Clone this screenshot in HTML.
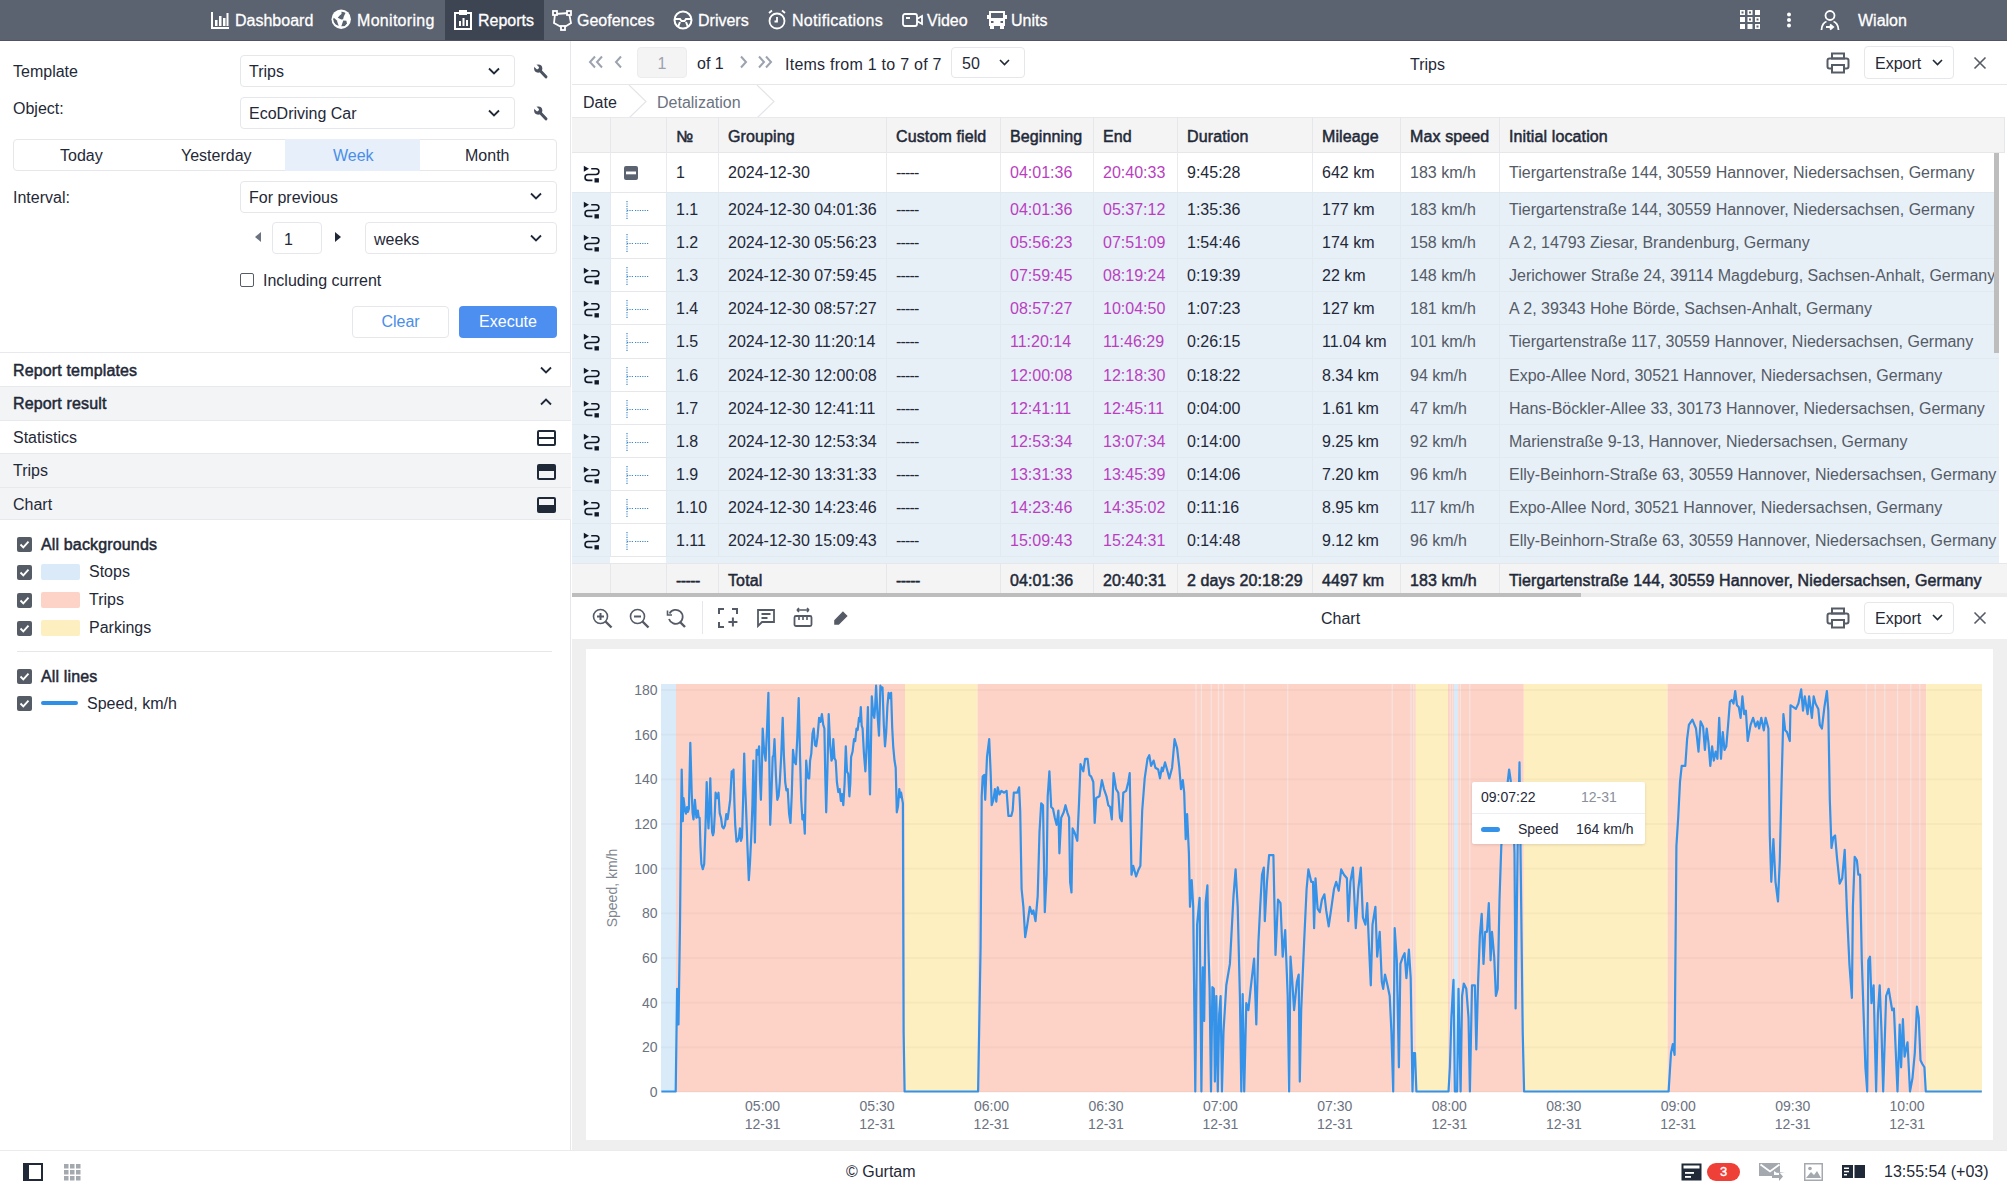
<!DOCTYPE html>
<html><head><meta charset="utf-8">
<style>
*{box-sizing:border-box;margin:0;padding:0}
html,body{width:2007px;height:1192px;overflow:hidden;background:#fff;font-family:"Liberation Sans",sans-serif;color:#1f2937;font-size:16px}
.abs{position:absolute}
#nav{position:absolute;left:0;top:0;width:2007px;height:40px;background:#5b6270;color:#fff}
.nt{position:absolute;top:1px;height:40px;line-height:40px;font-size:16px;color:#fff;white-space:nowrap;-webkit-text-stroke:0.3px #fff}
.nt svg{position:absolute;top:10px}
#left{position:absolute;left:0;top:40px;width:571px;height:1110px;background:#fff;border-right:1px solid #e5e7eb}
#right{position:absolute;left:572px;top:40px;width:1435px;height:1110px;background:#fff}
#status{position:absolute;left:0;top:1150px;width:2007px;height:42px;background:#fff;border-top:1px solid #ebebeb}
.lbl{position:absolute;margin-top:1px;font-size:16px;color:#1f2937;white-space:nowrap}
.sel{position:absolute;border:1px solid #e5e7eb;border-radius:4px;background:#fff;font-size:16px;color:#1f2937;white-space:nowrap}
.cell{position:absolute;margin-top:1px;font-size:16px;white-space:nowrap;color:#1f2937}
.hd{-webkit-text-stroke:0.5px currentColor;letter-spacing:0.12px}
.mg{color:#b93fc0}
.gr{color:#545b66}
</style></head><body>
<div id="nav" style="z-index:5;height:41px;border-bottom:1px solid #4f5560">
<div class="abs" style="left:445px;top:0;width:99px;height:40px;background:#3e4552"></div>
<svg class="abs" style="left:210px;top:10px" width="20" height="20" viewBox="0 0 20 20" fill="#fff"><rect x="1" y="2" width="2" height="17"/><rect x="1" y="17" width="18" height="2"/><rect x="5" y="10" width="2.5" height="6"/><rect x="9" y="6" width="2.5" height="10"/><rect x="13" y="8" width="2.5" height="8"/><rect x="16.5" y="3" width="2" height="13"/></svg>
<div class="nt" style="left:235px">Dashboard</div>
<svg class="abs" style="left:331px;top:9px" width="21" height="21" viewBox="0 0 21 21"><defs><clipPath id="gc"><circle cx="10.2" cy="10.2" r="7.9"/></clipPath></defs><circle cx="10.2" cy="10.2" r="9.7" fill="#fff"/><g clip-path="url(#gc)" fill="#5b6270"><path d="M10.5 2.6L14.6 3.8 12.8 7.4 12.1 10.3 10.3 10.5 6.7 8.7 8.7 6.4 10.5 4.9z"/><path d="M2.6 8.5L5.9 11.5 7.7 16.9 3.6 15.1 1 10.5z"/><path d="M12.3 11.5L15.4 11.8 15.9 14.6 13.8 17.2 10.3 17.2z"/></g></svg>
<div class="nt" style="left:357px;letter-spacing:0.3px">Monitoring</div>
<svg class="abs" style="left:453px;top:10px" width="20" height="20" viewBox="0 0 20 20" fill="none" stroke="#fff" stroke-width="2"><rect x="2" y="3" width="16" height="16"/><rect x="7" y="1" width="6" height="3" fill="#fff"/><rect x="6" y="11" width="2" height="5" fill="#fff" stroke="none"/><rect x="9.5" y="8" width="2" height="8" fill="#fff" stroke="none"/><rect x="13" y="10" width="2" height="6" fill="#fff" stroke="none"/></svg>
<div class="nt" style="left:478px">Reports</div>
<svg class="abs" style="left:551px;top:9px" width="22" height="22" viewBox="0 0 22 22" fill="none" stroke="#fff" stroke-width="1.8"><path d="M4 5L18 4 20 14 12 19 3 14Z"/><rect x="2" y="2" width="4" height="4" fill="#5b6270"/><rect x="16" y="2" width="4" height="4" fill="#5b6270"/><rect x="10" y="17" width="4" height="4" fill="#5b6270"/></svg>
<div class="nt" style="left:577px">Geofences</div>
<svg class="abs" style="left:673px;top:10px" width="20" height="20" viewBox="0 0 20 20" fill="none" stroke="#fff" stroke-width="2"><circle cx="10" cy="10" r="8.5"/><path d="M2 9h5l1.5 2h3L13 9h5M7 12l-2 5M13 12l2 5" /></svg>
<div class="nt" style="left:698px">Drivers</div>
<svg class="abs" style="left:767px;top:9px" width="20" height="22" viewBox="0 0 20 22" fill="none" stroke="#fff" stroke-width="1.8"><circle cx="10" cy="12" r="7.5"/><path d="M10 8v4.5h-2.5M2 4l3-2.5M18 4l-3-2.5"/></svg>
<div class="nt" style="left:792px;letter-spacing:0.3px">Notifications</div>
<svg class="abs" style="left:902px;top:12px" width="22" height="16" viewBox="0 0 22 16" fill="none" stroke="#fff" stroke-width="1.8"><rect x="1" y="2" width="14" height="12" rx="2"/><path d="M15 7l5-3v8l-5-3"/><rect x="4" y="5" width="4" height="2" fill="#fff" stroke="none"/></svg>
<div class="nt" style="left:927px">Video</div>
<svg class="abs" style="left:987px;top:10px" width="20" height="20" viewBox="0 0 20 20" fill="#fff"><path d="M2 1h16v15H2z M4 3v5h12V3z"/><rect x="3" y="15" width="4" height="4"/><rect x="13" y="15" width="4" height="4"/><rect x="0" y="5" width="2" height="4"/><rect x="18" y="5" width="2" height="4"/><rect x="4" y="11" width="2.5" height="2" fill="#5b6270"/><rect x="13.5" y="11" width="2.5" height="2" fill="#5b6270"/></svg>
<div class="nt" style="left:1011px">Units</div>
<svg class="abs" style="left:1740px;top:10px" width="20" height="19" viewBox="0 0 20 19" fill="#fff"><g><rect x="0" y="0" width="5" height="5"/><rect x="7.5" y="0" width="5" height="5"/><rect x="15" y="0" width="5" height="5"/><rect x="0" y="7" width="5" height="5"/><rect x="7.5" y="7" width="5" height="5"/><rect x="15" y="7" width="5" height="5"/><rect x="0" y="14" width="5" height="5"/><rect x="7.5" y="14" width="5" height="5"/><rect x="15" y="14" width="5" height="5"/></g><g fill="#5b6270"><rect x="1.5" y="1.5" width="2" height="2"/><rect x="9" y="1.5" width="2" height="2"/><rect x="9" y="8.5" width="2" height="2"/><rect x="16.5" y="8.5" width="2" height="2"/><rect x="16.5" y="15.5" width="2" height="2"/></g></svg>
<svg class="abs" style="left:1786px;top:12px" width="6" height="16" viewBox="0 0 6 16" fill="#fff"><circle cx="3" cy="2.5" r="2"/><circle cx="3" cy="8" r="2"/><circle cx="3" cy="13.5" r="2"/></svg>
<svg class="abs" style="left:1820px;top:9px" width="20" height="22" viewBox="0 0 20 22" fill="none" stroke="#fff" stroke-width="1.8"><circle cx="10" cy="6.5" r="4.5"/><path d="M1.5 21c0-5 3-8 5-8.5M18.5 21c0-5-3-8-5-8.5"/><path d="M6 18h6M10 15.5l3 2.5-3 2.5" stroke-width="2"/></svg>
<div class="nt" style="left:1858px">Wialon</div>
</div>
<div id="left">
<div class="lbl" style="left:13px;top:22px">Template</div>
<div class="sel" style="left:240px;top:15px;width:275px;height:32px;padding:7px 0 0 8px">Trips</div>
<svg class="abs" style="left:488px;top:27px" width="12" height="8" viewBox="0 0 12 8" fill="none" stroke="#1f2937" stroke-width="1.8"><path d="M1 1.5l5 5 5-5"/></svg>
<svg class="abs" style="left:533px;top:23px" width="15" height="16" viewBox="0 0 15 16"><defs><mask id="wm24"><rect width="15" height="16" fill="#fff"/><path d="M4.3 4.6L0 0.3" stroke="#000" stroke-width="3.2" stroke-linecap="round"/></mask></defs><circle cx="5.2" cy="5.6" r="4.1" fill="#4b5260" mask="url(#wm24)"/><path d="M6.5 7l6.4 6.8" stroke="#4b5260" stroke-width="3" stroke-linecap="round"/></svg>
<div class="lbl" style="left:13px;top:59px">Object:</div>
<div class="sel" style="left:240px;top:57px;width:275px;height:32px;padding:7px 0 0 8px">EcoDriving Car</div>
<svg class="abs" style="left:488px;top:69px" width="12" height="8" viewBox="0 0 12 8" fill="none" stroke="#1f2937" stroke-width="1.8"><path d="M1 1.5l5 5 5-5"/></svg>
<svg class="abs" style="left:533px;top:65px" width="15" height="16" viewBox="0 0 15 16"><defs><mask id="wm66"><rect width="15" height="16" fill="#fff"/><path d="M4.3 4.6L0 0.3" stroke="#000" stroke-width="3.2" stroke-linecap="round"/></mask></defs><circle cx="5.2" cy="5.6" r="4.1" fill="#4b5260" mask="url(#wm66)"/><path d="M6.5 7l6.4 6.8" stroke="#4b5260" stroke-width="3" stroke-linecap="round"/></svg>
<div class="abs" style="left:13px;top:99px;width:544px;height:32px;border:1px solid #e5e7eb;border-radius:4px"></div>
<div class="abs" style="left:285px;top:99px;width:135px;height:32px;background:#e6effa"></div>
<div class="lbl" style="left:60px;top:106px">Today</div>
<div class="lbl" style="left:181px;top:106px">Yesterday</div>
<div class="lbl" style="left:333px;top:106px;color:#4a8ee8">Week</div>
<div class="lbl" style="left:465px;top:106px">Month</div>
<div class="lbl" style="left:13px;top:148px">Interval:</div>
<div class="sel" style="left:240px;top:141px;width:317px;height:32px;padding:7px 0 0 8px">For previous</div>
<svg class="abs" style="left:530px;top:152px" width="12" height="8" viewBox="0 0 12 8" fill="none" stroke="#1f2937" stroke-width="1.8"><path d="M1 1.5l5 5 5-5"/></svg>
<svg class="abs" style="left:254px;top:192px" width="8" height="10" viewBox="0 0 8 10" fill="#6b7280"><path d="M7 0v10L1 5z"/></svg>
<div class="sel" style="left:272px;top:182px;width:50px;height:32px;padding:8px 0 0 11px">1</div>
<svg class="abs" style="left:334px;top:192px" width="8" height="10" viewBox="0 0 8 10" fill="#1f2937"><path d="M1 0v10l6-5z"/></svg>
<div class="sel" style="left:365px;top:182px;width:192px;height:32px;padding:8px 0 0 8px">weeks</div>
<svg class="abs" style="left:530px;top:194px" width="12" height="8" viewBox="0 0 12 8" fill="none" stroke="#1f2937" stroke-width="1.8"><path d="M1 1.5l5 5 5-5"/></svg>
<div class="abs" style="left:240px;top:233px;width:14px;height:14px;border:1.5px solid #565c66;border-radius:2px"></div>
<div class="lbl" style="left:263px;top:231px">Including current</div>
<div class="abs" style="left:352px;top:266px;width:97px;height:32px;border:1px solid #e5e7eb;border-radius:4px;color:#4a8ee8;text-align:center;line-height:30px">Clear</div>
<div class="abs" style="left:459px;top:266px;width:98px;height:32px;background:#4d8ff0;border-radius:4px;color:#fff;text-align:center;line-height:32px">Execute</div>
<div class="abs" style="left:0;top:312px;width:571px;height:1px;background:#e8e9ec"></div>
<div class="lbl" style="left:13px;top:321px;-webkit-text-stroke:0.5px #1f2937;letter-spacing:0.15px">Report templates</div>
<svg class="abs" style="left:540px;top:326px" width="12" height="8" viewBox="0 0 12 8" fill="none" stroke="#1f2937" stroke-width="1.8"><path d="M1 1.5l5 5 5-5"/></svg>
<div class="abs" style="left:0;top:346px;width:571px;height:34px;background:#f3f4f6;border-top:1px solid #e8e9ec"></div>
<div class="lbl" style="left:13px;top:354px;-webkit-text-stroke:0.5px #1f2937;letter-spacing:0.15px">Report result</div>
<svg class="abs" style="left:540px;top:358px" width="12" height="8" viewBox="0 0 12 8" fill="none" stroke="#1f2937" stroke-width="1.8"><path d="M1 6.5l5-5 5 5"/></svg>
<div class="abs" style="left:0;top:380px;width:571px;height:33px;background:#fff;border-top:1px solid #e8e9ec"></div>
<div class="lbl" style="left:13px;top:388px">Statistics</div>
<svg class="abs" style="left:537px;top:390px" width="19" height="16" viewBox="0 0 19 16" fill="none" stroke="#1f2937" stroke-width="2"><rect x="1" y="1" width="17" height="14" rx="1"/><path d="M1 8h17"/></svg>
<div class="abs" style="left:0;top:413px;width:571px;height:34px;background:#f3f4f6;border-top:1px solid #e8e9ec"></div>
<div class="lbl" style="left:13px;top:421px">Trips</div>
<svg class="abs" style="left:537px;top:424px" width="19" height="16" viewBox="0 0 19 16"><rect x="1" y="1" width="17" height="14" rx="1" fill="none" stroke="#1f2937" stroke-width="2"/><rect x="1" y="1" width="17" height="6" fill="#1f2937"/></svg>
<div class="abs" style="left:0;top:447px;width:571px;height:33px;background:#f3f4f6;border-top:1px solid #e8e9ec;border-bottom:1px solid #e8e9ec"></div>
<div class="lbl" style="left:13px;top:455px">Chart</div>
<svg class="abs" style="left:537px;top:457px" width="19" height="16" viewBox="0 0 19 16"><rect x="1" y="1" width="17" height="14" rx="1" fill="none" stroke="#1f2937" stroke-width="2"/><rect x="1" y="8" width="17" height="7" fill="#1f2937"/></svg>
<svg class="abs" style="left:17px;top:497px" width="15" height="15" viewBox="0 0 15 15"><rect x="0" y="0" width="15" height="15" rx="2" fill="#565c66"/><path d="M3.5 7.5l2.8 2.8 5.2-5.6" fill="none" stroke="#fff" stroke-width="1.9"/></svg>
<div class="lbl" style="left:41px;top:495px;-webkit-text-stroke:0.5px #1f2937;letter-spacing:0.15px">All backgrounds</div>
<svg class="abs" style="left:17px;top:525px" width="15" height="15" viewBox="0 0 15 15"><rect x="0" y="0" width="15" height="15" rx="2" fill="#565c66"/><path d="M3.5 7.5l2.8 2.8 5.2-5.6" fill="none" stroke="#fff" stroke-width="1.9"/></svg>
<div class="abs" style="left:41px;top:524px;width:39px;height:16px;background:#daeaf9;border-radius:2px"></div>
<div class="lbl" style="left:89px;top:522px">Stops</div>
<svg class="abs" style="left:17px;top:553px" width="15" height="15" viewBox="0 0 15 15"><rect x="0" y="0" width="15" height="15" rx="2" fill="#565c66"/><path d="M3.5 7.5l2.8 2.8 5.2-5.6" fill="none" stroke="#fff" stroke-width="1.9"/></svg>
<div class="abs" style="left:41px;top:552px;width:39px;height:16px;background:#fed3c7;border-radius:2px"></div>
<div class="lbl" style="left:89px;top:550px">Trips</div>
<svg class="abs" style="left:17px;top:581px" width="15" height="15" viewBox="0 0 15 15"><rect x="0" y="0" width="15" height="15" rx="2" fill="#565c66"/><path d="M3.5 7.5l2.8 2.8 5.2-5.6" fill="none" stroke="#fff" stroke-width="1.9"/></svg>
<div class="abs" style="left:41px;top:580px;width:39px;height:16px;background:#feefc0;border-radius:2px"></div>
<div class="lbl" style="left:89px;top:578px">Parkings</div>
<div class="abs" style="left:17px;top:611px;width:535px;height:1px;background:#e5e7eb"></div>
<svg class="abs" style="left:17px;top:629px" width="15" height="15" viewBox="0 0 15 15"><rect x="0" y="0" width="15" height="15" rx="2" fill="#565c66"/><path d="M3.5 7.5l2.8 2.8 5.2-5.6" fill="none" stroke="#fff" stroke-width="1.9"/></svg>
<div class="lbl" style="left:41px;top:627px;-webkit-text-stroke:0.5px #1f2937;letter-spacing:0.15px">All lines</div>
<svg class="abs" style="left:17px;top:656px" width="15" height="15" viewBox="0 0 15 15"><rect x="0" y="0" width="15" height="15" rx="2" fill="#565c66"/><path d="M3.5 7.5l2.8 2.8 5.2-5.6" fill="none" stroke="#fff" stroke-width="1.9"/></svg>
<div class="abs" style="left:41px;top:661px;width:37px;height:4px;background:#2f8fe6;border-radius:2px"></div>
<div class="lbl" style="left:87px;top:654px">Speed, km/h</div>
</div>
<div id="right">
<svg class="abs" style="left:16px;top:15px" width="16" height="14" viewBox="0 0 16 14" fill="none" stroke="#9ca3af" stroke-width="2"><path d="M7 1.5L2 7l5 5.5M14 1.5L9 7l5 5.5"/></svg>
<svg class="abs" style="left:41px;top:15px" width="10" height="14" viewBox="0 0 10 14" fill="none" stroke="#9ca3af" stroke-width="2"><path d="M8 1.5L3 7l5 5.5"/></svg>
<div class="abs" style="left:65px;top:7px;width:50px;height:31px;background:#f4f4f5;border:1px solid #ececee;border-radius:4px;text-align:center;line-height:31px;color:#9ca3af">1</div>
<div class="lbl" style="left:125px;top:14px">of 1</div>
<svg class="abs" style="left:167px;top:15px" width="10" height="14" viewBox="0 0 10 14" fill="none" stroke="#9ca3af" stroke-width="2"><path d="M2 1.5L7 7l-5 5.5"/></svg>
<svg class="abs" style="left:185px;top:15px" width="16" height="14" viewBox="0 0 16 14" fill="none" stroke="#9ca3af" stroke-width="2"><path d="M2 1.5L7 7l-5 5.5M9 1.5L14 7l-5 5.5"/></svg>
<div class="lbl" style="left:213px;top:15px;letter-spacing:0.25px">Items from 1 to 7 of 7</div>
<div class="sel" style="left:379px;top:7px;width:74px;height:31px;padding:7px 0 0 10px">50</div>
<svg class="abs" style="left:427px;top:19px" width="11" height="7" viewBox="0 0 11 7" fill="none" stroke="#1f2937" stroke-width="1.6"><path d="M1 1l4.5 4.5L10 1"/></svg>
<div class="lbl" style="left:838px;top:15px">Trips</div>
<svg class="abs" style="left:1254px;top:12px" width="24" height="22" viewBox="0 0 24 22" fill="none" stroke="#565c66" stroke-width="2"><rect x="6" y="1.5" width="12" height="5"/><rect x="1.5" y="6.5" width="21" height="10" rx="2"/><rect x="6" y="13" width="12" height="7.5" fill="#fff"/></svg>
<div class="sel" style="left:1292px;top:6px;width:90px;height:33px;padding:8px 0 0 10px">Export</div>
<svg class="abs" style="left:1360px;top:19px" width="11" height="7" viewBox="0 0 11 7" fill="none" stroke="#1f2937" stroke-width="1.6"><path d="M1 1l4.5 4.5L10 1"/></svg>
<svg class="abs" style="left:1401px;top:16px" width="14" height="14" viewBox="0 0 14 14" fill="none" stroke="#565c66" stroke-width="1.6"><path d="M1.5 1.5l11 11M12.5 1.5l-11 11"/></svg>
<div class="abs" style="left:0;top:44px;width:1435px;height:1px;background:#e5e7eb"></div>
<div class="lbl" style="left:11px;top:53px">Date</div>
<svg class="abs" style="left:56px;top:45px" width="20" height="33" viewBox="0 0 20 33" fill="none" stroke="#e3e5e8" stroke-width="1.2"><path d="M1 0l17 16.5L1 33"/></svg>
<div class="lbl" style="left:85px;top:53px;color:#6b7280">Detalization</div>
<svg class="abs" style="left:184px;top:45px" width="20" height="33" viewBox="0 0 20 33" fill="none" stroke="#e3e5e8" stroke-width="1.2"><path d="M1 0l17 16.5L1 33"/></svg>
<div class="abs" style="left:0;top:77px;width:1433px;height:36px;background:#f4f4f5;border-top:1px solid #e8e9ec;border-bottom:1px solid #e5e7eb;border-right:1px solid #e5e7eb"></div>
<div class="abs" style="left:38px;top:77px;width:1px;height:36px;background:#e5e7eb"></div>
<div class="abs" style="left:94px;top:77px;width:1px;height:36px;background:#e5e7eb"></div>
<div class="cell hd" style="left:104px;top:87px">№</div>
<div class="abs" style="left:146px;top:77px;width:1px;height:36px;background:#e5e7eb"></div>
<div class="cell hd" style="left:156px;top:87px">Grouping</div>
<div class="abs" style="left:314px;top:77px;width:1px;height:36px;background:#e5e7eb"></div>
<div class="cell hd" style="left:324px;top:87px">Custom field</div>
<div class="abs" style="left:428px;top:77px;width:1px;height:36px;background:#e5e7eb"></div>
<div class="cell hd" style="left:438px;top:87px">Beginning</div>
<div class="abs" style="left:521px;top:77px;width:1px;height:36px;background:#e5e7eb"></div>
<div class="cell hd" style="left:531px;top:87px">End</div>
<div class="abs" style="left:605px;top:77px;width:1px;height:36px;background:#e5e7eb"></div>
<div class="cell hd" style="left:615px;top:87px">Duration</div>
<div class="abs" style="left:740px;top:77px;width:1px;height:36px;background:#e5e7eb"></div>
<div class="cell hd" style="left:750px;top:87px">Mileage</div>
<div class="abs" style="left:828px;top:77px;width:1px;height:36px;background:#e5e7eb"></div>
<div class="cell hd" style="left:838px;top:87px">Max speed</div>
<div class="abs" style="left:927px;top:77px;width:1px;height:36px;background:#e5e7eb"></div>
<div class="cell hd" style="left:937px;top:87px">Initial location</div>
<div class="abs" style="left:0;top:113px;width:1427px;height:39px;background:#fff"></div>
<div class="abs" style="left:38px;top:113px;width:1px;height:39px;background:#e9ebee"></div>
<div class="abs" style="left:94px;top:113px;width:1px;height:39px;background:#e9ebee"></div>
<div class="abs" style="left:146px;top:113px;width:1px;height:39px;background:#e9ebee"></div>
<div class="abs" style="left:314px;top:113px;width:1px;height:39px;background:#e9ebee"></div>
<div class="abs" style="left:428px;top:113px;width:1px;height:39px;background:#e9ebee"></div>
<div class="abs" style="left:521px;top:113px;width:1px;height:39px;background:#e9ebee"></div>
<div class="abs" style="left:605px;top:113px;width:1px;height:39px;background:#e9ebee"></div>
<div class="abs" style="left:740px;top:113px;width:1px;height:39px;background:#e9ebee"></div>
<div class="abs" style="left:828px;top:113px;width:1px;height:39px;background:#e9ebee"></div>
<div class="abs" style="left:927px;top:113px;width:1px;height:39px;background:#e9ebee"></div>
<svg class="abs" style="left:11px;top:125px" width="17" height="18" viewBox="0 0 17 18"><path d="M0.8 0.8L6 3.7 0.8 6.7z" fill="#111827"/><path d="M8.2 3.7H13a2.9 2.9 0 0 1 0 5.8H5a2.95 2.95 0 0 0 0 5.9h4.4" fill="none" stroke="#111827" stroke-width="1.6"/><rect x="11.5" y="13.2" width="4.4" height="4.3" fill="#111827"/></svg>
<svg class="abs" style="left:52px;top:126px" width="14" height="14" viewBox="0 0 14 14"><rect width="14" height="14" rx="2" fill="#5b6270"/><rect x="2" y="5.5" width="10" height="2.8" fill="#fff"/></svg>
<div class="cell " style="left:104px;top:123px">1</div>
<div class="cell " style="left:156px;top:123px">2024-12-30</div>
<div class="cell " style="left:324px;top:123px;letter-spacing:-0.8px">-----</div>
<div class="cell mg" style="left:438px;top:123px">04:01:36</div>
<div class="cell mg" style="left:531px;top:123px">20:40:33</div>
<div class="cell " style="left:615px;top:123px">9:45:28</div>
<div class="cell " style="left:750px;top:123px">642 km</div>
<div class="cell gr" style="left:838px;top:123px">183 km/h</div>
<div class="cell gr" style="left:937px;top:123px">Tiergartenstraße 144, 30559 Hannover, Niedersachsen, Germany</div>
<div class="abs" style="left:0;top:152px;width:1427px;height:33px;background:#e7eff7;border-top:1px solid #e1e9f1"></div>
<div class="abs" style="left:38px;top:152px;width:56px;height:33px;background:#fff;border-top:1px solid #e5e7eb"></div>
<div class="abs" style="left:38px;top:152px;width:1px;height:33px;background:#e1e9f1"></div>
<div class="abs" style="left:94px;top:152px;width:1px;height:33px;background:#e1e9f1"></div>
<div class="abs" style="left:146px;top:152px;width:1px;height:33px;background:#e1e9f1"></div>
<div class="abs" style="left:314px;top:152px;width:1px;height:33px;background:#e1e9f1"></div>
<div class="abs" style="left:428px;top:152px;width:1px;height:33px;background:#e1e9f1"></div>
<div class="abs" style="left:521px;top:152px;width:1px;height:33px;background:#e1e9f1"></div>
<div class="abs" style="left:605px;top:152px;width:1px;height:33px;background:#e1e9f1"></div>
<div class="abs" style="left:740px;top:152px;width:1px;height:33px;background:#e1e9f1"></div>
<div class="abs" style="left:828px;top:152px;width:1px;height:33px;background:#e1e9f1"></div>
<div class="abs" style="left:927px;top:152px;width:1px;height:33px;background:#e1e9f1"></div>
<svg class="abs" style="left:11px;top:161px" width="17" height="18" viewBox="0 0 17 18"><path d="M0.8 0.8L6 3.7 0.8 6.7z" fill="#111827"/><path d="M8.2 3.7H13a2.9 2.9 0 0 1 0 5.8H5a2.95 2.95 0 0 0 0 5.9h4.4" fill="none" stroke="#111827" stroke-width="1.6"/><rect x="11.5" y="13.2" width="4.4" height="4.3" fill="#111827"/></svg>
<svg class="abs" style="left:54px;top:161px" width="24" height="18" viewBox="0 0 24 18"><path d="M1 0v18M1 9.5h6M9 9.5h14" fill="none" stroke="#3c86c6" stroke-width="1.2" stroke-dasharray="1.2 1.2"/></svg>
<div class="cell " style="left:104px;top:160px">1.1</div>
<div class="cell " style="left:156px;top:160px">2024-12-30 04:01:36</div>
<div class="cell " style="left:324px;top:160px;letter-spacing:-0.8px">-----</div>
<div class="cell mg" style="left:438px;top:160px">04:01:36</div>
<div class="cell mg" style="left:531px;top:160px">05:37:12</div>
<div class="cell " style="left:615px;top:160px">1:35:36</div>
<div class="cell " style="left:750px;top:160px">177 km</div>
<div class="cell gr" style="left:838px;top:160px">183 km/h</div>
<div class="cell gr" style="left:937px;top:160px">Tiergartenstraße 144, 30559 Hannover, Niedersachsen, Germany</div>
<div class="abs" style="left:0;top:185px;width:1427px;height:33px;background:#e7eff7;border-top:1px solid #e1e9f1"></div>
<div class="abs" style="left:38px;top:185px;width:56px;height:33px;background:#fff;border-top:1px solid #e5e7eb"></div>
<div class="abs" style="left:38px;top:185px;width:1px;height:33px;background:#e1e9f1"></div>
<div class="abs" style="left:94px;top:185px;width:1px;height:33px;background:#e1e9f1"></div>
<div class="abs" style="left:146px;top:185px;width:1px;height:33px;background:#e1e9f1"></div>
<div class="abs" style="left:314px;top:185px;width:1px;height:33px;background:#e1e9f1"></div>
<div class="abs" style="left:428px;top:185px;width:1px;height:33px;background:#e1e9f1"></div>
<div class="abs" style="left:521px;top:185px;width:1px;height:33px;background:#e1e9f1"></div>
<div class="abs" style="left:605px;top:185px;width:1px;height:33px;background:#e1e9f1"></div>
<div class="abs" style="left:740px;top:185px;width:1px;height:33px;background:#e1e9f1"></div>
<div class="abs" style="left:828px;top:185px;width:1px;height:33px;background:#e1e9f1"></div>
<div class="abs" style="left:927px;top:185px;width:1px;height:33px;background:#e1e9f1"></div>
<svg class="abs" style="left:11px;top:194px" width="17" height="18" viewBox="0 0 17 18"><path d="M0.8 0.8L6 3.7 0.8 6.7z" fill="#111827"/><path d="M8.2 3.7H13a2.9 2.9 0 0 1 0 5.8H5a2.95 2.95 0 0 0 0 5.9h4.4" fill="none" stroke="#111827" stroke-width="1.6"/><rect x="11.5" y="13.2" width="4.4" height="4.3" fill="#111827"/></svg>
<svg class="abs" style="left:54px;top:194px" width="24" height="18" viewBox="0 0 24 18"><path d="M1 0v18M1 9.5h6M9 9.5h14" fill="none" stroke="#3c86c6" stroke-width="1.2" stroke-dasharray="1.2 1.2"/></svg>
<div class="cell " style="left:104px;top:193px">1.2</div>
<div class="cell " style="left:156px;top:193px">2024-12-30 05:56:23</div>
<div class="cell " style="left:324px;top:193px;letter-spacing:-0.8px">-----</div>
<div class="cell mg" style="left:438px;top:193px">05:56:23</div>
<div class="cell mg" style="left:531px;top:193px">07:51:09</div>
<div class="cell " style="left:615px;top:193px">1:54:46</div>
<div class="cell " style="left:750px;top:193px">174 km</div>
<div class="cell gr" style="left:838px;top:193px">158 km/h</div>
<div class="cell gr" style="left:937px;top:193px">A 2, 14793 Ziesar, Brandenburg, Germany</div>
<div class="abs" style="left:0;top:218px;width:1427px;height:33px;background:#e7eff7;border-top:1px solid #e1e9f1"></div>
<div class="abs" style="left:38px;top:218px;width:56px;height:33px;background:#fff;border-top:1px solid #e5e7eb"></div>
<div class="abs" style="left:38px;top:218px;width:1px;height:33px;background:#e1e9f1"></div>
<div class="abs" style="left:94px;top:218px;width:1px;height:33px;background:#e1e9f1"></div>
<div class="abs" style="left:146px;top:218px;width:1px;height:33px;background:#e1e9f1"></div>
<div class="abs" style="left:314px;top:218px;width:1px;height:33px;background:#e1e9f1"></div>
<div class="abs" style="left:428px;top:218px;width:1px;height:33px;background:#e1e9f1"></div>
<div class="abs" style="left:521px;top:218px;width:1px;height:33px;background:#e1e9f1"></div>
<div class="abs" style="left:605px;top:218px;width:1px;height:33px;background:#e1e9f1"></div>
<div class="abs" style="left:740px;top:218px;width:1px;height:33px;background:#e1e9f1"></div>
<div class="abs" style="left:828px;top:218px;width:1px;height:33px;background:#e1e9f1"></div>
<div class="abs" style="left:927px;top:218px;width:1px;height:33px;background:#e1e9f1"></div>
<svg class="abs" style="left:11px;top:227px" width="17" height="18" viewBox="0 0 17 18"><path d="M0.8 0.8L6 3.7 0.8 6.7z" fill="#111827"/><path d="M8.2 3.7H13a2.9 2.9 0 0 1 0 5.8H5a2.95 2.95 0 0 0 0 5.9h4.4" fill="none" stroke="#111827" stroke-width="1.6"/><rect x="11.5" y="13.2" width="4.4" height="4.3" fill="#111827"/></svg>
<svg class="abs" style="left:54px;top:227px" width="24" height="18" viewBox="0 0 24 18"><path d="M1 0v18M1 9.5h6M9 9.5h14" fill="none" stroke="#3c86c6" stroke-width="1.2" stroke-dasharray="1.2 1.2"/></svg>
<div class="cell " style="left:104px;top:226px">1.3</div>
<div class="cell " style="left:156px;top:226px">2024-12-30 07:59:45</div>
<div class="cell " style="left:324px;top:226px;letter-spacing:-0.8px">-----</div>
<div class="cell mg" style="left:438px;top:226px">07:59:45</div>
<div class="cell mg" style="left:531px;top:226px">08:19:24</div>
<div class="cell " style="left:615px;top:226px">0:19:39</div>
<div class="cell " style="left:750px;top:226px">22 km</div>
<div class="cell gr" style="left:838px;top:226px">148 km/h</div>
<div class="cell gr" style="left:937px;top:226px">Jerichower Straße 24, 39114 Magdeburg, Sachsen-Anhalt, Germany</div>
<div class="abs" style="left:0;top:251px;width:1427px;height:33px;background:#e7eff7;border-top:1px solid #e1e9f1"></div>
<div class="abs" style="left:38px;top:251px;width:56px;height:33px;background:#fff;border-top:1px solid #e5e7eb"></div>
<div class="abs" style="left:38px;top:251px;width:1px;height:33px;background:#e1e9f1"></div>
<div class="abs" style="left:94px;top:251px;width:1px;height:33px;background:#e1e9f1"></div>
<div class="abs" style="left:146px;top:251px;width:1px;height:33px;background:#e1e9f1"></div>
<div class="abs" style="left:314px;top:251px;width:1px;height:33px;background:#e1e9f1"></div>
<div class="abs" style="left:428px;top:251px;width:1px;height:33px;background:#e1e9f1"></div>
<div class="abs" style="left:521px;top:251px;width:1px;height:33px;background:#e1e9f1"></div>
<div class="abs" style="left:605px;top:251px;width:1px;height:33px;background:#e1e9f1"></div>
<div class="abs" style="left:740px;top:251px;width:1px;height:33px;background:#e1e9f1"></div>
<div class="abs" style="left:828px;top:251px;width:1px;height:33px;background:#e1e9f1"></div>
<div class="abs" style="left:927px;top:251px;width:1px;height:33px;background:#e1e9f1"></div>
<svg class="abs" style="left:11px;top:260px" width="17" height="18" viewBox="0 0 17 18"><path d="M0.8 0.8L6 3.7 0.8 6.7z" fill="#111827"/><path d="M8.2 3.7H13a2.9 2.9 0 0 1 0 5.8H5a2.95 2.95 0 0 0 0 5.9h4.4" fill="none" stroke="#111827" stroke-width="1.6"/><rect x="11.5" y="13.2" width="4.4" height="4.3" fill="#111827"/></svg>
<svg class="abs" style="left:54px;top:260px" width="24" height="18" viewBox="0 0 24 18"><path d="M1 0v18M1 9.5h6M9 9.5h14" fill="none" stroke="#3c86c6" stroke-width="1.2" stroke-dasharray="1.2 1.2"/></svg>
<div class="cell " style="left:104px;top:259px">1.4</div>
<div class="cell " style="left:156px;top:259px">2024-12-30 08:57:27</div>
<div class="cell " style="left:324px;top:259px;letter-spacing:-0.8px">-----</div>
<div class="cell mg" style="left:438px;top:259px">08:57:27</div>
<div class="cell mg" style="left:531px;top:259px">10:04:50</div>
<div class="cell " style="left:615px;top:259px">1:07:23</div>
<div class="cell " style="left:750px;top:259px">127 km</div>
<div class="cell gr" style="left:838px;top:259px">181 km/h</div>
<div class="cell gr" style="left:937px;top:259px">A 2, 39343 Hohe Börde, Sachsen-Anhalt, Germany</div>
<div class="abs" style="left:0;top:284px;width:1427px;height:34px;background:#e7eff7;border-top:1px solid #e1e9f1"></div>
<div class="abs" style="left:38px;top:284px;width:56px;height:34px;background:#fff;border-top:1px solid #e5e7eb"></div>
<div class="abs" style="left:38px;top:284px;width:1px;height:34px;background:#e1e9f1"></div>
<div class="abs" style="left:94px;top:284px;width:1px;height:34px;background:#e1e9f1"></div>
<div class="abs" style="left:146px;top:284px;width:1px;height:34px;background:#e1e9f1"></div>
<div class="abs" style="left:314px;top:284px;width:1px;height:34px;background:#e1e9f1"></div>
<div class="abs" style="left:428px;top:284px;width:1px;height:34px;background:#e1e9f1"></div>
<div class="abs" style="left:521px;top:284px;width:1px;height:34px;background:#e1e9f1"></div>
<div class="abs" style="left:605px;top:284px;width:1px;height:34px;background:#e1e9f1"></div>
<div class="abs" style="left:740px;top:284px;width:1px;height:34px;background:#e1e9f1"></div>
<div class="abs" style="left:828px;top:284px;width:1px;height:34px;background:#e1e9f1"></div>
<div class="abs" style="left:927px;top:284px;width:1px;height:34px;background:#e1e9f1"></div>
<svg class="abs" style="left:11px;top:293px" width="17" height="18" viewBox="0 0 17 18"><path d="M0.8 0.8L6 3.7 0.8 6.7z" fill="#111827"/><path d="M8.2 3.7H13a2.9 2.9 0 0 1 0 5.8H5a2.95 2.95 0 0 0 0 5.9h4.4" fill="none" stroke="#111827" stroke-width="1.6"/><rect x="11.5" y="13.2" width="4.4" height="4.3" fill="#111827"/></svg>
<svg class="abs" style="left:54px;top:293px" width="24" height="18" viewBox="0 0 24 18"><path d="M1 0v18M1 9.5h6M9 9.5h14" fill="none" stroke="#3c86c6" stroke-width="1.2" stroke-dasharray="1.2 1.2"/></svg>
<div class="cell " style="left:104px;top:292px">1.5</div>
<div class="cell " style="left:156px;top:292px">2024-12-30 11:20:14</div>
<div class="cell " style="left:324px;top:292px;letter-spacing:-0.8px">-----</div>
<div class="cell mg" style="left:438px;top:292px">11:20:14</div>
<div class="cell mg" style="left:531px;top:292px">11:46:29</div>
<div class="cell " style="left:615px;top:292px">0:26:15</div>
<div class="cell " style="left:750px;top:292px">11.04 km</div>
<div class="cell gr" style="left:838px;top:292px">101 km/h</div>
<div class="cell gr" style="left:937px;top:292px">Tiergartenstraße 117, 30559 Hannover, Niedersachsen, Germany</div>
<div class="abs" style="left:0;top:318px;width:1427px;height:33px;background:#e7eff7;border-top:1px solid #e1e9f1"></div>
<div class="abs" style="left:38px;top:318px;width:56px;height:33px;background:#fff;border-top:1px solid #e5e7eb"></div>
<div class="abs" style="left:38px;top:318px;width:1px;height:33px;background:#e1e9f1"></div>
<div class="abs" style="left:94px;top:318px;width:1px;height:33px;background:#e1e9f1"></div>
<div class="abs" style="left:146px;top:318px;width:1px;height:33px;background:#e1e9f1"></div>
<div class="abs" style="left:314px;top:318px;width:1px;height:33px;background:#e1e9f1"></div>
<div class="abs" style="left:428px;top:318px;width:1px;height:33px;background:#e1e9f1"></div>
<div class="abs" style="left:521px;top:318px;width:1px;height:33px;background:#e1e9f1"></div>
<div class="abs" style="left:605px;top:318px;width:1px;height:33px;background:#e1e9f1"></div>
<div class="abs" style="left:740px;top:318px;width:1px;height:33px;background:#e1e9f1"></div>
<div class="abs" style="left:828px;top:318px;width:1px;height:33px;background:#e1e9f1"></div>
<div class="abs" style="left:927px;top:318px;width:1px;height:33px;background:#e1e9f1"></div>
<svg class="abs" style="left:11px;top:327px" width="17" height="18" viewBox="0 0 17 18"><path d="M0.8 0.8L6 3.7 0.8 6.7z" fill="#111827"/><path d="M8.2 3.7H13a2.9 2.9 0 0 1 0 5.8H5a2.95 2.95 0 0 0 0 5.9h4.4" fill="none" stroke="#111827" stroke-width="1.6"/><rect x="11.5" y="13.2" width="4.4" height="4.3" fill="#111827"/></svg>
<svg class="abs" style="left:54px;top:327px" width="24" height="18" viewBox="0 0 24 18"><path d="M1 0v18M1 9.5h6M9 9.5h14" fill="none" stroke="#3c86c6" stroke-width="1.2" stroke-dasharray="1.2 1.2"/></svg>
<div class="cell " style="left:104px;top:326px">1.6</div>
<div class="cell " style="left:156px;top:326px">2024-12-30 12:00:08</div>
<div class="cell " style="left:324px;top:326px;letter-spacing:-0.8px">-----</div>
<div class="cell mg" style="left:438px;top:326px">12:00:08</div>
<div class="cell mg" style="left:531px;top:326px">12:18:30</div>
<div class="cell " style="left:615px;top:326px">0:18:22</div>
<div class="cell " style="left:750px;top:326px">8.34 km</div>
<div class="cell gr" style="left:838px;top:326px">94 km/h</div>
<div class="cell gr" style="left:937px;top:326px">Expo-Allee Nord, 30521 Hannover, Niedersachsen, Germany</div>
<div class="abs" style="left:0;top:351px;width:1427px;height:33px;background:#e7eff7;border-top:1px solid #e1e9f1"></div>
<div class="abs" style="left:38px;top:351px;width:56px;height:33px;background:#fff;border-top:1px solid #e5e7eb"></div>
<div class="abs" style="left:38px;top:351px;width:1px;height:33px;background:#e1e9f1"></div>
<div class="abs" style="left:94px;top:351px;width:1px;height:33px;background:#e1e9f1"></div>
<div class="abs" style="left:146px;top:351px;width:1px;height:33px;background:#e1e9f1"></div>
<div class="abs" style="left:314px;top:351px;width:1px;height:33px;background:#e1e9f1"></div>
<div class="abs" style="left:428px;top:351px;width:1px;height:33px;background:#e1e9f1"></div>
<div class="abs" style="left:521px;top:351px;width:1px;height:33px;background:#e1e9f1"></div>
<div class="abs" style="left:605px;top:351px;width:1px;height:33px;background:#e1e9f1"></div>
<div class="abs" style="left:740px;top:351px;width:1px;height:33px;background:#e1e9f1"></div>
<div class="abs" style="left:828px;top:351px;width:1px;height:33px;background:#e1e9f1"></div>
<div class="abs" style="left:927px;top:351px;width:1px;height:33px;background:#e1e9f1"></div>
<svg class="abs" style="left:11px;top:360px" width="17" height="18" viewBox="0 0 17 18"><path d="M0.8 0.8L6 3.7 0.8 6.7z" fill="#111827"/><path d="M8.2 3.7H13a2.9 2.9 0 0 1 0 5.8H5a2.95 2.95 0 0 0 0 5.9h4.4" fill="none" stroke="#111827" stroke-width="1.6"/><rect x="11.5" y="13.2" width="4.4" height="4.3" fill="#111827"/></svg>
<svg class="abs" style="left:54px;top:360px" width="24" height="18" viewBox="0 0 24 18"><path d="M1 0v18M1 9.5h6M9 9.5h14" fill="none" stroke="#3c86c6" stroke-width="1.2" stroke-dasharray="1.2 1.2"/></svg>
<div class="cell " style="left:104px;top:359px">1.7</div>
<div class="cell " style="left:156px;top:359px">2024-12-30 12:41:11</div>
<div class="cell " style="left:324px;top:359px;letter-spacing:-0.8px">-----</div>
<div class="cell mg" style="left:438px;top:359px">12:41:11</div>
<div class="cell mg" style="left:531px;top:359px">12:45:11</div>
<div class="cell " style="left:615px;top:359px">0:04:00</div>
<div class="cell " style="left:750px;top:359px">1.61 km</div>
<div class="cell gr" style="left:838px;top:359px">47 km/h</div>
<div class="cell gr" style="left:937px;top:359px">Hans-Böckler-Allee 33, 30173 Hannover, Niedersachsen, Germany</div>
<div class="abs" style="left:0;top:384px;width:1427px;height:33px;background:#e7eff7;border-top:1px solid #e1e9f1"></div>
<div class="abs" style="left:38px;top:384px;width:56px;height:33px;background:#fff;border-top:1px solid #e5e7eb"></div>
<div class="abs" style="left:38px;top:384px;width:1px;height:33px;background:#e1e9f1"></div>
<div class="abs" style="left:94px;top:384px;width:1px;height:33px;background:#e1e9f1"></div>
<div class="abs" style="left:146px;top:384px;width:1px;height:33px;background:#e1e9f1"></div>
<div class="abs" style="left:314px;top:384px;width:1px;height:33px;background:#e1e9f1"></div>
<div class="abs" style="left:428px;top:384px;width:1px;height:33px;background:#e1e9f1"></div>
<div class="abs" style="left:521px;top:384px;width:1px;height:33px;background:#e1e9f1"></div>
<div class="abs" style="left:605px;top:384px;width:1px;height:33px;background:#e1e9f1"></div>
<div class="abs" style="left:740px;top:384px;width:1px;height:33px;background:#e1e9f1"></div>
<div class="abs" style="left:828px;top:384px;width:1px;height:33px;background:#e1e9f1"></div>
<div class="abs" style="left:927px;top:384px;width:1px;height:33px;background:#e1e9f1"></div>
<svg class="abs" style="left:11px;top:393px" width="17" height="18" viewBox="0 0 17 18"><path d="M0.8 0.8L6 3.7 0.8 6.7z" fill="#111827"/><path d="M8.2 3.7H13a2.9 2.9 0 0 1 0 5.8H5a2.95 2.95 0 0 0 0 5.9h4.4" fill="none" stroke="#111827" stroke-width="1.6"/><rect x="11.5" y="13.2" width="4.4" height="4.3" fill="#111827"/></svg>
<svg class="abs" style="left:54px;top:393px" width="24" height="18" viewBox="0 0 24 18"><path d="M1 0v18M1 9.5h6M9 9.5h14" fill="none" stroke="#3c86c6" stroke-width="1.2" stroke-dasharray="1.2 1.2"/></svg>
<div class="cell " style="left:104px;top:392px">1.8</div>
<div class="cell " style="left:156px;top:392px">2024-12-30 12:53:34</div>
<div class="cell " style="left:324px;top:392px;letter-spacing:-0.8px">-----</div>
<div class="cell mg" style="left:438px;top:392px">12:53:34</div>
<div class="cell mg" style="left:531px;top:392px">13:07:34</div>
<div class="cell " style="left:615px;top:392px">0:14:00</div>
<div class="cell " style="left:750px;top:392px">9.25 km</div>
<div class="cell gr" style="left:838px;top:392px">92 km/h</div>
<div class="cell gr" style="left:937px;top:392px">Marienstraße 9-13, Hannover, Niedersachsen, Germany</div>
<div class="abs" style="left:0;top:417px;width:1427px;height:33px;background:#e7eff7;border-top:1px solid #e1e9f1"></div>
<div class="abs" style="left:38px;top:417px;width:56px;height:33px;background:#fff;border-top:1px solid #e5e7eb"></div>
<div class="abs" style="left:38px;top:417px;width:1px;height:33px;background:#e1e9f1"></div>
<div class="abs" style="left:94px;top:417px;width:1px;height:33px;background:#e1e9f1"></div>
<div class="abs" style="left:146px;top:417px;width:1px;height:33px;background:#e1e9f1"></div>
<div class="abs" style="left:314px;top:417px;width:1px;height:33px;background:#e1e9f1"></div>
<div class="abs" style="left:428px;top:417px;width:1px;height:33px;background:#e1e9f1"></div>
<div class="abs" style="left:521px;top:417px;width:1px;height:33px;background:#e1e9f1"></div>
<div class="abs" style="left:605px;top:417px;width:1px;height:33px;background:#e1e9f1"></div>
<div class="abs" style="left:740px;top:417px;width:1px;height:33px;background:#e1e9f1"></div>
<div class="abs" style="left:828px;top:417px;width:1px;height:33px;background:#e1e9f1"></div>
<div class="abs" style="left:927px;top:417px;width:1px;height:33px;background:#e1e9f1"></div>
<svg class="abs" style="left:11px;top:426px" width="17" height="18" viewBox="0 0 17 18"><path d="M0.8 0.8L6 3.7 0.8 6.7z" fill="#111827"/><path d="M8.2 3.7H13a2.9 2.9 0 0 1 0 5.8H5a2.95 2.95 0 0 0 0 5.9h4.4" fill="none" stroke="#111827" stroke-width="1.6"/><rect x="11.5" y="13.2" width="4.4" height="4.3" fill="#111827"/></svg>
<svg class="abs" style="left:54px;top:426px" width="24" height="18" viewBox="0 0 24 18"><path d="M1 0v18M1 9.5h6M9 9.5h14" fill="none" stroke="#3c86c6" stroke-width="1.2" stroke-dasharray="1.2 1.2"/></svg>
<div class="cell " style="left:104px;top:425px">1.9</div>
<div class="cell " style="left:156px;top:425px">2024-12-30 13:31:33</div>
<div class="cell " style="left:324px;top:425px;letter-spacing:-0.8px">-----</div>
<div class="cell mg" style="left:438px;top:425px">13:31:33</div>
<div class="cell mg" style="left:531px;top:425px">13:45:39</div>
<div class="cell " style="left:615px;top:425px">0:14:06</div>
<div class="cell " style="left:750px;top:425px">7.20 km</div>
<div class="cell gr" style="left:838px;top:425px">96 km/h</div>
<div class="cell gr" style="left:937px;top:425px">Elly-Beinhorn-Straße 63, 30559 Hannover, Niedersachsen, Germany</div>
<div class="abs" style="left:0;top:450px;width:1427px;height:33px;background:#e7eff7;border-top:1px solid #e1e9f1"></div>
<div class="abs" style="left:38px;top:450px;width:56px;height:33px;background:#fff;border-top:1px solid #e5e7eb"></div>
<div class="abs" style="left:38px;top:450px;width:1px;height:33px;background:#e1e9f1"></div>
<div class="abs" style="left:94px;top:450px;width:1px;height:33px;background:#e1e9f1"></div>
<div class="abs" style="left:146px;top:450px;width:1px;height:33px;background:#e1e9f1"></div>
<div class="abs" style="left:314px;top:450px;width:1px;height:33px;background:#e1e9f1"></div>
<div class="abs" style="left:428px;top:450px;width:1px;height:33px;background:#e1e9f1"></div>
<div class="abs" style="left:521px;top:450px;width:1px;height:33px;background:#e1e9f1"></div>
<div class="abs" style="left:605px;top:450px;width:1px;height:33px;background:#e1e9f1"></div>
<div class="abs" style="left:740px;top:450px;width:1px;height:33px;background:#e1e9f1"></div>
<div class="abs" style="left:828px;top:450px;width:1px;height:33px;background:#e1e9f1"></div>
<div class="abs" style="left:927px;top:450px;width:1px;height:33px;background:#e1e9f1"></div>
<svg class="abs" style="left:11px;top:459px" width="17" height="18" viewBox="0 0 17 18"><path d="M0.8 0.8L6 3.7 0.8 6.7z" fill="#111827"/><path d="M8.2 3.7H13a2.9 2.9 0 0 1 0 5.8H5a2.95 2.95 0 0 0 0 5.9h4.4" fill="none" stroke="#111827" stroke-width="1.6"/><rect x="11.5" y="13.2" width="4.4" height="4.3" fill="#111827"/></svg>
<svg class="abs" style="left:54px;top:459px" width="24" height="18" viewBox="0 0 24 18"><path d="M1 0v18M1 9.5h6M9 9.5h14" fill="none" stroke="#3c86c6" stroke-width="1.2" stroke-dasharray="1.2 1.2"/></svg>
<div class="cell " style="left:104px;top:458px">1.10</div>
<div class="cell " style="left:156px;top:458px">2024-12-30 14:23:46</div>
<div class="cell " style="left:324px;top:458px;letter-spacing:-0.8px">-----</div>
<div class="cell mg" style="left:438px;top:458px">14:23:46</div>
<div class="cell mg" style="left:531px;top:458px">14:35:02</div>
<div class="cell " style="left:615px;top:458px">0:11:16</div>
<div class="cell " style="left:750px;top:458px">8.95 km</div>
<div class="cell gr" style="left:838px;top:458px">117 km/h</div>
<div class="cell gr" style="left:937px;top:458px">Expo-Allee Nord, 30521 Hannover, Niedersachsen, Germany</div>
<div class="abs" style="left:0;top:483px;width:1427px;height:33px;background:#e7eff7;border-top:1px solid #e1e9f1"></div>
<div class="abs" style="left:38px;top:483px;width:56px;height:33px;background:#fff;border-top:1px solid #e5e7eb"></div>
<div class="abs" style="left:38px;top:483px;width:1px;height:33px;background:#e1e9f1"></div>
<div class="abs" style="left:94px;top:483px;width:1px;height:33px;background:#e1e9f1"></div>
<div class="abs" style="left:146px;top:483px;width:1px;height:33px;background:#e1e9f1"></div>
<div class="abs" style="left:314px;top:483px;width:1px;height:33px;background:#e1e9f1"></div>
<div class="abs" style="left:428px;top:483px;width:1px;height:33px;background:#e1e9f1"></div>
<div class="abs" style="left:521px;top:483px;width:1px;height:33px;background:#e1e9f1"></div>
<div class="abs" style="left:605px;top:483px;width:1px;height:33px;background:#e1e9f1"></div>
<div class="abs" style="left:740px;top:483px;width:1px;height:33px;background:#e1e9f1"></div>
<div class="abs" style="left:828px;top:483px;width:1px;height:33px;background:#e1e9f1"></div>
<div class="abs" style="left:927px;top:483px;width:1px;height:33px;background:#e1e9f1"></div>
<svg class="abs" style="left:11px;top:492px" width="17" height="18" viewBox="0 0 17 18"><path d="M0.8 0.8L6 3.7 0.8 6.7z" fill="#111827"/><path d="M8.2 3.7H13a2.9 2.9 0 0 1 0 5.8H5a2.95 2.95 0 0 0 0 5.9h4.4" fill="none" stroke="#111827" stroke-width="1.6"/><rect x="11.5" y="13.2" width="4.4" height="4.3" fill="#111827"/></svg>
<svg class="abs" style="left:54px;top:492px" width="24" height="18" viewBox="0 0 24 18"><path d="M1 0v18M1 9.5h6M9 9.5h14" fill="none" stroke="#3c86c6" stroke-width="1.2" stroke-dasharray="1.2 1.2"/></svg>
<div class="cell " style="left:104px;top:491px">1.11</div>
<div class="cell " style="left:156px;top:491px">2024-12-30 15:09:43</div>
<div class="cell " style="left:324px;top:491px;letter-spacing:-0.8px">-----</div>
<div class="cell mg" style="left:438px;top:491px">15:09:43</div>
<div class="cell mg" style="left:531px;top:491px">15:24:31</div>
<div class="cell " style="left:615px;top:491px">0:14:48</div>
<div class="cell " style="left:750px;top:491px">9.12 km</div>
<div class="cell gr" style="left:838px;top:491px">96 km/h</div>
<div class="cell gr" style="left:937px;top:491px">Elly-Beinhorn-Straße 63, 30559 Hannover, Niedersachsen, Germany</div>
<div class="abs" style="left:0;top:516px;width:1427px;height:7px;background:#e7eff7;border-top:1px solid #e1e9f1"></div>
<div class="abs" style="left:38px;top:516px;width:56px;height:7px;background:#fff;border-top:1px solid #e5e7eb"></div>
<div class="abs" style="left:0;top:523px;width:1435px;height:30px;background:#f4f4f5;border-top:1px solid #e5e7eb"></div>
<div class="abs" style="left:38px;top:523px;width:1px;height:30px;background:#e5e7eb"></div>
<div class="abs" style="left:94px;top:523px;width:1px;height:30px;background:#e5e7eb"></div>
<div class="abs" style="left:146px;top:523px;width:1px;height:30px;background:#e5e7eb"></div>
<div class="abs" style="left:314px;top:523px;width:1px;height:30px;background:#e5e7eb"></div>
<div class="abs" style="left:428px;top:523px;width:1px;height:30px;background:#e5e7eb"></div>
<div class="abs" style="left:521px;top:523px;width:1px;height:30px;background:#e5e7eb"></div>
<div class="abs" style="left:605px;top:523px;width:1px;height:30px;background:#e5e7eb"></div>
<div class="abs" style="left:740px;top:523px;width:1px;height:30px;background:#e5e7eb"></div>
<div class="abs" style="left:828px;top:523px;width:1px;height:30px;background:#e5e7eb"></div>
<div class="abs" style="left:927px;top:523px;width:1px;height:30px;background:#e5e7eb"></div>
<div class="cell hd" style="left:104px;top:531px;letter-spacing:-0.6px">-----</div>
<div class="cell hd" style="left:156px;top:531px">Total</div>
<div class="cell hd" style="left:324px;top:531px;letter-spacing:-0.6px">-----</div>
<div class="cell hd" style="left:438px;top:531px">04:01:36</div>
<div class="cell hd" style="left:531px;top:531px">20:40:31</div>
<div class="cell hd" style="left:615px;top:531px">2 days 20:18:29</div>
<div class="cell hd" style="left:750px;top:531px">4497 km</div>
<div class="cell hd" style="left:838px;top:531px">183 km/h</div>
<div class="cell hd" style="left:937px;top:531px">Tiergartenstraße 144, 30559 Hannover, Niedersachsen, Germany</div>
<div class="abs" style="left:0;top:553px;width:1435px;height:4px;background:#ececec"></div>
<div class="abs" style="left:0;top:553px;width:1009px;height:4px;background:#bdbdbd"></div>
<div class="abs" style="left:1422px;top:113px;width:5px;height:200px;background:#bdbdbd"></div>
<div class="abs" style="left:0;top:557px;width:1435px;height:42px;background:#fff"></div>
<svg class="abs" style="left:20px;top:568px" width="21" height="21" viewBox="0 0 21 21" fill="none" stroke="#555b66" stroke-width="1.6"><circle cx="8.5" cy="8.5" r="7"/><path d="M8.5 5v7M5 8.5h7" stroke-width="2"/><path d="M13.5 13.5l6 6" stroke-width="2.4"/></svg>
<svg class="abs" style="left:57px;top:568px" width="21" height="21" viewBox="0 0 21 21" fill="none" stroke="#555b66" stroke-width="1.6"><circle cx="8.5" cy="8.5" r="7"/><path d="M5 8.5h7" stroke-width="2"/><path d="M13.5 13.5l6 6" stroke-width="2.4"/></svg>
<svg class="abs" style="left:94px;top:568px" width="21" height="21" viewBox="0 0 21 21" fill="none" stroke="#555b66" stroke-width="1.8"><path d="M3.5 5.5A7 7 0 1 1 3 11"/><path d="M1.5 2.5v4.5h4.5" stroke-width="1.6"/><path d="M14 14l5 5" stroke-width="2.4"/></svg>
<div class="abs" style="left:130px;top:561px;width:1px;height:33px;background:#e5e7eb"></div>
<svg class="abs" style="left:146px;top:568px" width="20" height="20" viewBox="0 0 20 20" fill="none" stroke="#555b66" stroke-width="1.8"><path d="M1 6V1h5M14 1h5v5M1 14v5h5M14.9 9.6v9M10.4 14.1h9" stroke-width="2"/></svg>
<svg class="abs" style="left:184px;top:568px" width="20" height="20" viewBox="0 0 20 20" fill="none" stroke="#555b66" stroke-width="1.8"><path d="M2 2h16v12H6l-4 4z"/><path d="M5.5 6h9M5.5 10h6"/></svg>
<svg class="abs" style="left:221px;top:566px" width="20" height="22" viewBox="0 0 20 22" fill="none" stroke="#555b66" stroke-width="1.6"><path d="M4 4h12M4 4l2-2M4 4l2 2M16 4l-2-2M16 4l-2 2"/><rect x="1.5" y="10" width="17" height="10" rx="1.5" stroke-width="1.8"/><path d="M6 10v4M10 10v4M14 10v4"/></svg>
<svg class="abs" style="left:261px;top:571px" width="15" height="15" viewBox="0 0 15 15" fill="none" stroke="#555b66" stroke-width="1.6"><path d="M10 1.5l3.5 3.5-8 8H2v-3.5z" fill="#555b66"/></svg>
<div class="lbl" style="left:749px;top:569px">Chart</div>
<svg class="abs" style="left:1254px;top:567px" width="24" height="22" viewBox="0 0 24 22" fill="none" stroke="#565c66" stroke-width="2"><rect x="6" y="1.5" width="12" height="5"/><rect x="1.5" y="6.5" width="21" height="10" rx="2"/><rect x="6" y="13" width="12" height="7.5" fill="#fff"/></svg>
<div class="sel" style="left:1292px;top:562px;width:90px;height:32px;padding:7px 0 0 10px">Export</div>
<svg class="abs" style="left:1360px;top:574px" width="11" height="7" viewBox="0 0 11 7" fill="none" stroke="#1f2937" stroke-width="1.6"><path d="M1 1l4.5 4.5L10 1"/></svg>
<svg class="abs" style="left:1401px;top:571px" width="14" height="14" viewBox="0 0 14 14" fill="none" stroke="#565c66" stroke-width="1.6"><path d="M1.5 1.5l11 11M12.5 1.5l-11 11"/></svg>
<div class="abs" style="left:0;top:599px;width:1435px;height:511px;background:#efefef"></div>
<div class="abs" style="left:14px;top:609px;width:1407px;height:491px;background:#fff"></div>
<svg class="abs" style="left:0;top:0" width="1435" height="1110" viewBox="0 0 1435 1110">
<rect x="89.0" y="644" width="15.0" height="408" fill="#d9eaf9"/>
<rect x="104.0" y="644" width="229.0" height="408" fill="#fed3c7"/>
<rect x="333.0" y="644" width="72.5" height="408" fill="#feefc0"/>
<rect x="405.5" y="644" width="438.3" height="408" fill="#fed3c7"/>
<rect x="843.8" y="644" width="32.2" height="408" fill="#feefc0"/>
<rect x="876.0" y="644" width="6.0" height="408" fill="#fed3c7"/>
<rect x="882.0" y="644" width="4.2" height="408" fill="#d9eaf9"/>
<rect x="886.2" y="644" width="65.6" height="408" fill="#fed3c7"/>
<rect x="951.8" y="644" width="143.7" height="408" fill="#feefc0"/>
<rect x="1095.5" y="644" width="258.7" height="408" fill="#fed3c7"/>
<rect x="1354.2" y="644" width="55.8" height="408" fill="#feefc0"/>
<rect x="623.4" y="644" width="1.2" height="408" fill="#f4e4e2"/>
<rect x="628.8" y="644" width="1.2" height="408" fill="#f4e4e2"/>
<rect x="638.7" y="644" width="1.2" height="408" fill="#f4e4e2"/>
<rect x="645.9" y="644" width="1.2" height="408" fill="#f4e4e2"/>
<rect x="650.9" y="644" width="1.2" height="408" fill="#f4e4e2"/>
<rect x="671.6" y="644" width="1.2" height="408" fill="#f4e4e2"/>
<rect x="715.1" y="644" width="1.2" height="408" fill="#f4e4e2"/>
<rect x="819.6" y="644" width="1.2" height="408" fill="#f4e4e2"/>
<rect x="838.4" y="644" width="1.2" height="408" fill="#f4e4e2"/>
<rect x="841.2" y="644" width="1.2" height="408" fill="#f4e4e2"/>
<rect x="877.7" y="644" width="1.2" height="408" fill="#f4e4e2"/>
<rect x="880.1" y="644" width="1.2" height="408" fill="#f4e4e2"/>
<rect x="887.8" y="644" width="1.2" height="408" fill="#f4e4e2"/>
<rect x="897.2" y="644" width="1.2" height="408" fill="#f4e4e2"/>
<rect x="1293.7" y="644" width="1.2" height="408" fill="#f4e4e2"/>
<rect x="1302.6" y="644" width="1.2" height="408" fill="#f4e4e2"/>
<rect x="1312.2" y="644" width="1.2" height="408" fill="#f4e4e2"/>
<rect x="1325.0" y="644" width="1.2" height="408" fill="#f4e4e2"/>
<rect x="1338.2" y="644" width="1.2" height="408" fill="#f4e4e2"/>
<rect x="1347.2" y="644" width="1.2" height="408" fill="#f4e4e2"/>
<rect x="89" y="1051.0" width="1321" height="2" fill="#000" fill-opacity="0.028"/>
<text x="85.5" y="1057.0" text-anchor="end" font-size="14" fill="#6b7280">0</text>
<rect x="89" y="1006.3" width="1321" height="2" fill="#000" fill-opacity="0.028"/>
<text x="85.5" y="1012.3" text-anchor="end" font-size="14" fill="#6b7280">20</text>
<rect x="89" y="961.7" width="1321" height="2" fill="#000" fill-opacity="0.028"/>
<text x="85.5" y="967.7" text-anchor="end" font-size="14" fill="#6b7280">40</text>
<rect x="89" y="917.0" width="1321" height="2" fill="#000" fill-opacity="0.028"/>
<text x="85.5" y="923.0" text-anchor="end" font-size="14" fill="#6b7280">60</text>
<rect x="89" y="872.3" width="1321" height="2" fill="#000" fill-opacity="0.028"/>
<text x="85.5" y="878.3" text-anchor="end" font-size="14" fill="#6b7280">80</text>
<rect x="89" y="827.7" width="1321" height="2" fill="#000" fill-opacity="0.028"/>
<text x="85.5" y="833.7" text-anchor="end" font-size="14" fill="#6b7280">100</text>
<rect x="89" y="783.0" width="1321" height="2" fill="#000" fill-opacity="0.028"/>
<text x="85.5" y="789.0" text-anchor="end" font-size="14" fill="#6b7280">120</text>
<rect x="89" y="738.3" width="1321" height="2" fill="#000" fill-opacity="0.028"/>
<text x="85.5" y="744.3" text-anchor="end" font-size="14" fill="#6b7280">140</text>
<rect x="89" y="693.7" width="1321" height="2" fill="#000" fill-opacity="0.028"/>
<text x="85.5" y="699.7" text-anchor="end" font-size="14" fill="#6b7280">160</text>
<rect x="89" y="649.0" width="1321" height="2" fill="#000" fill-opacity="0.028"/>
<text x="85.5" y="655.0" text-anchor="end" font-size="14" fill="#6b7280">180</text>
<text x="190.6" y="1071" text-anchor="middle" font-size="14" fill="#6b7280">05:00</text>
<text x="190.6" y="1089" text-anchor="middle" font-size="14" fill="#6b7280">12-31</text>
<text x="305.1" y="1071" text-anchor="middle" font-size="14" fill="#6b7280">05:30</text>
<text x="305.1" y="1089" text-anchor="middle" font-size="14" fill="#6b7280">12-31</text>
<text x="419.5" y="1071" text-anchor="middle" font-size="14" fill="#6b7280">06:00</text>
<text x="419.5" y="1089" text-anchor="middle" font-size="14" fill="#6b7280">12-31</text>
<text x="534.0" y="1071" text-anchor="middle" font-size="14" fill="#6b7280">06:30</text>
<text x="534.0" y="1089" text-anchor="middle" font-size="14" fill="#6b7280">12-31</text>
<text x="648.4" y="1071" text-anchor="middle" font-size="14" fill="#6b7280">07:00</text>
<text x="648.4" y="1089" text-anchor="middle" font-size="14" fill="#6b7280">12-31</text>
<text x="762.8" y="1071" text-anchor="middle" font-size="14" fill="#6b7280">07:30</text>
<text x="762.8" y="1089" text-anchor="middle" font-size="14" fill="#6b7280">12-31</text>
<text x="877.3" y="1071" text-anchor="middle" font-size="14" fill="#6b7280">08:00</text>
<text x="877.3" y="1089" text-anchor="middle" font-size="14" fill="#6b7280">12-31</text>
<text x="991.8" y="1071" text-anchor="middle" font-size="14" fill="#6b7280">08:30</text>
<text x="991.8" y="1089" text-anchor="middle" font-size="14" fill="#6b7280">12-31</text>
<text x="1106.2" y="1071" text-anchor="middle" font-size="14" fill="#6b7280">09:00</text>
<text x="1106.2" y="1089" text-anchor="middle" font-size="14" fill="#6b7280">12-31</text>
<text x="1220.7" y="1071" text-anchor="middle" font-size="14" fill="#6b7280">09:30</text>
<text x="1220.7" y="1089" text-anchor="middle" font-size="14" fill="#6b7280">12-31</text>
<text x="1335.1" y="1071" text-anchor="middle" font-size="14" fill="#6b7280">10:00</text>
<text x="1335.1" y="1089" text-anchor="middle" font-size="14" fill="#6b7280">12-31</text>
<text transform="translate(45,848) rotate(-90)" text-anchor="middle" font-size="14" fill="#80868f">Speed, km/h</text>
<polyline fill="none" stroke="#3492e8" stroke-width="2.2" stroke-linejoin="round" points="89.4,1051.5 103.7,1051.5 105.1,948.8 106.5,984.5 108.0,884.6 109.0,784.8 109.7,729.5 110.8,781.2 111.5,758.0 113.0,770.5 114.0,773.7 115.1,767.0 116.0,771.8 116.9,768.7 118.3,702.8 119.7,752.7 120.6,773.0 121.5,779.4 122.9,759.8 124.4,777.7 125.8,770.5 126.7,777.5 127.6,777.7 128.5,807.0 129.4,824.0 130.8,829.2 132.2,824.0 133.5,786.4 134.7,742.0 135.6,771.2 136.5,788.4 137.4,766.6 138.3,738.4 139.2,770.8 140.1,791.9 141.0,795.3 141.8,791.9 142.7,775.8 143.6,752.7 145.1,758.2 146.5,752.7 147.7,773.1 149.0,777.7 150.2,786.7 151.5,788.4 152.9,785.6 154.3,774.1 155.6,779.1 156.8,770.5 158.2,759.6 159.7,731.3 160.6,736.9 161.5,729.5 162.4,762.5 163.2,784.8 164.5,801.7 165.7,800.8 166.8,797.9 167.9,788.4 168.9,801.0 170.0,797.3 171.1,760.1 172.2,713.5 173.0,742.3 173.9,763.4 175.4,805.4 176.8,840.1 178.0,822.6 179.3,795.5 180.4,765.9 181.4,720.6 182.9,802.6 183.7,760.3 184.6,709.9 185.9,714.6 187.1,706.3 188.0,739.9 188.9,759.8 189.8,729.4 190.7,688.5 192.1,710.8 193.6,720.6 195.0,690.1 196.4,652.8 197.3,722.2 198.2,784.8 199.4,755.1 200.7,717.0 201.6,715.2 202.5,699.2 203.9,735.1 205.3,759.8 206.6,755.8 207.8,742.0 209.2,716.4 210.7,677.8 211.9,715.6 213.2,742.0 214.4,750.4 215.7,749.1 217.1,773.8 218.5,783.0 219.8,753.6 221.0,709.9 222.4,721.5 223.9,724.2 225.3,697.6 226.7,658.2 228.0,715.2 229.2,759.8 230.4,779.4 231.6,775.0 232.8,793.7 234.2,720.6 235.3,734.2 236.4,738.4 237.2,738.4 238.1,720.6 239.3,713.6 240.5,693.7 241.7,688.5 243.0,705.0 244.2,706.3 245.6,696.0 247.1,677.8 248.5,681.9 249.9,674.2 251.2,684.6 252.4,688.5 253.3,737.4 254.2,772.3 255.4,730.9 256.7,674.2 258.1,703.8 259.5,720.6 260.4,718.1 261.3,699.2 262.5,718.3 263.7,720.6 264.9,742.0 266.3,752.1 267.7,749.1 268.9,761.0 270.1,754.1 271.3,765.2 272.6,743.8 273.8,706.3 275.0,731.6 276.2,733.8 277.4,756.3 278.3,743.6 279.1,717.0 280.6,711.5 282.0,699.2 283.2,701.1 284.5,688.5 285.7,690.0 287.0,677.8 287.9,681.4 288.8,667.1 289.7,685.7 290.6,688.5 292.0,714.6 293.4,731.3 294.7,704.5 295.9,667.1 297.0,717.8 298.0,754.5 298.9,708.6 299.8,656.4 301.1,672.9 302.3,677.8 303.2,665.8 304.1,645.7 305.5,674.4 307.0,695.6 308.4,645.7 309.5,649.9 310.5,647.5 311.8,684.5 313.0,706.3 314.2,692.3 315.4,666.2 316.6,652.8 317.8,658.2 319.1,652.8 320.2,687.8 321.2,706.3 322.5,720.5 323.7,727.7 324.8,772.3 326.0,766.4 327.3,749.1 328.2,757.2 329.1,752.7 330.9,763.4 331.6,991.6 332.6,1051.5 406.1,1051.5 407.2,988.1 408.6,906.0 409.7,756.3 410.7,736.6 412.2,734.9 413.2,759.8 415.0,717.0 417.2,699.2 418.6,731.3 419.7,765.2 421.4,759.8 422.9,749.1 424.3,761.6 425.7,747.3 427.5,754.5 429.3,750.9 432.1,752.7 434.6,750.9 436.4,775.9 439.3,775.9 440.7,770.5 441.8,752.7 445.3,752.7 447.1,747.3 448.2,770.5 449.6,849.0 451.4,866.8 453.2,897.1 455.3,884.6 457.8,866.8 460.0,873.9 461.4,870.4 463.5,881.1 465.7,856.1 467.5,791.9 469.2,763.4 471.0,765.2 472.8,872.2 474.6,834.7 475.7,756.3 477.4,731.3 479.2,767.0 481.0,768.7 482.8,777.7 484.6,784.8 486.4,770.5 487.4,813.3 489.2,777.7 491.7,772.3 493.5,765.2 495.3,772.3 497.1,777.7 498.1,841.8 499.5,852.5 500.6,788.4 502.4,791.9 505.3,800.8 507.0,763.4 508.5,724.2 509.9,727.7 511.3,731.3 513.1,718.8 515.6,718.8 517.4,734.9 519.2,736.6 521.3,742.0 522.7,783.0 524.2,758.0 527.4,756.3 529.9,740.2 532.0,749.1 534.5,756.3 536.3,765.2 538.1,767.0 539.8,779.4 541.6,733.1 544.1,749.1 546.3,752.7 548.0,777.7 549.8,781.2 551.3,752.7 554.1,750.9 556.3,742.0 557.7,733.1 559.5,834.7 561.2,825.8 564.1,836.5 566.6,829.4 568.4,825.8 570.2,770.5 572.7,738.4 575.5,718.8 577.3,715.2 579.1,725.9 581.6,720.6 583.4,727.7 586.2,729.5 588.0,738.4 589.8,727.7 590.8,731.3 593.0,722.4 595.5,731.3 597.3,738.4 600.1,727.7 602.6,699.2 605.1,708.1 607.3,727.7 609.0,749.1 610.8,740.2 612.2,752.7 613.7,799.1 615.1,774.1 616.9,813.3 618.0,866.8 619.7,840.1 621.2,866.8 622.2,956.0 623.3,1051.5 625.1,884.6 627.6,857.9 629.4,1051.5 630.8,927.4 632.2,980.9 633.6,863.2 635.4,845.4 636.5,909.6 637.6,948.8 639.0,1051.5 640.4,947.1 641.8,948.8 642.9,1041.6 644.3,956.0 645.8,1051.5 647.2,973.8 648.6,956.0 650.0,1051.5 651.5,991.6 654.3,945.3 657.9,923.9 661.5,856.1 663.6,829.4 665.7,866.8 667.9,956.0 669.3,1051.5 670.7,954.2 672.2,1051.5 674.3,963.1 676.4,970.2 678.6,948.8 682.1,918.5 684.3,984.5 686.4,902.5 688.2,866.8 690.0,834.7 691.8,827.6 692.8,881.1 695.0,841.8 697.1,815.1 701.4,815.1 703.5,915.0 706.0,859.7 708.5,863.2 710.7,916.7 713.2,890.0 715.7,956.0 717.1,1051.5 718.5,916.7 720.3,941.7 722.1,970.2 724.9,941.7 726.7,934.6 727.8,1041.6 729.2,970.2 732.1,902.5 734.6,849.0 736.4,829.4 739.2,841.8 741.0,841.8 742.1,888.2 743.5,838.3 745.6,868.6 747.8,872.2 749.9,859.7 752.4,854.3 754.2,870.4 756.7,886.4 759.5,866.8 762.0,849.0 764.2,841.8 766.7,850.8 769.2,829.4 772.0,834.7 774.9,838.3 776.3,881.1 778.4,841.8 780.9,827.6 783.8,888.2 786.3,849.0 788.8,827.6 790.9,877.5 793.4,884.6 795.2,863.2 797.0,906.0 798.8,945.3 800.5,884.6 803.4,866.8 805.2,916.7 807.7,891.8 809.8,941.7 811.2,948.8 813.0,934.6 815.5,945.3 817.7,956.0 819.4,991.6 821.2,1051.5 822.7,888.2 824.8,920.3 826.9,1027.3 828.4,923.9 830.9,916.7 832.6,913.2 834.4,938.1 836.9,909.6 838.7,938.1 840.5,1051.5 841.6,1013.0 843.0,1013.0 844.4,1051.5 876.5,1051.5 877.9,1027.3 879.4,977.4 881.5,939.9 882.9,1051.5 885.1,1051.5 886.5,948.8 888.6,1051.5 890.1,956.0 891.8,943.5 894.3,948.8 896.5,977.4 897.9,1051.5 900.0,945.3 902.9,945.3 904.3,1009.5 906.1,941.7 907.9,895.3 909.7,873.9 911.5,923.9 913.2,891.8 915.0,891.8 916.8,863.2 918.6,920.3 920.0,891.8 922.2,916.7 923.9,956.0 925.7,948.8 927.5,859.7 929.3,806.2 931.1,784.8 933.6,763.4 935.7,742.0 937.1,729.5 938.9,742.0 940.7,752.7 942.5,813.3 943.6,968.5 945.7,802.6 947.5,722.4 948.9,841.8 950.7,991.6 952.1,1051.5 1096.6,1051.5 1099.0,1013.0 1100.8,1004.1 1102.6,1014.8 1104.4,806.2 1106.2,777.7 1108.0,742.0 1109.7,725.9 1113.3,725.9 1115.1,699.2 1116.9,684.9 1120.4,679.6 1124.0,688.5 1126.5,711.7 1128.6,681.4 1131.1,686.7 1132.9,709.9 1134.7,688.5 1136.5,702.8 1138.3,725.9 1140.1,706.3 1141.8,720.6 1143.6,711.7 1145.4,718.8 1147.2,677.8 1149.0,718.8 1150.8,692.1 1152.5,709.9 1154.3,706.3 1156.1,684.9 1157.9,661.7 1159.7,660.0 1161.5,663.5 1163.2,651.0 1165.0,665.3 1166.8,667.1 1168.6,677.8 1170.4,656.4 1172.2,674.2 1173.9,670.7 1175.7,701.0 1178.6,684.9 1181.1,677.8 1183.6,686.7 1185.7,681.4 1187.1,688.5 1189.3,677.8 1191.8,690.3 1193.6,677.8 1196.4,688.5 1197.8,795.5 1199.3,841.8 1201.4,799.1 1203.5,841.8 1206.0,861.5 1207.8,820.4 1209.6,742.0 1211.4,674.2 1213.2,690.3 1215.0,692.1 1217.8,701.0 1218.5,665.3 1221.4,667.1 1223.9,668.9 1226.4,663.5 1229.2,649.3 1231.0,670.7 1232.8,656.4 1235.6,674.2 1237.1,656.4 1239.9,677.8 1241.7,656.4 1243.5,663.5 1246.3,668.9 1247.8,684.9 1249.9,688.5 1252.4,667.1 1254.9,651.0 1256.3,670.7 1257.8,759.8 1259.5,808.0 1261.3,797.3 1263.1,795.5 1264.9,816.9 1267.7,843.6 1270.2,838.3 1272.7,809.8 1274.9,870.4 1277.4,923.9 1279.9,957.8 1280.9,866.8 1282.7,816.9 1284.9,820.4 1286.3,834.7 1288.1,834.7 1289.8,920.3 1291.6,973.8 1293.4,1027.3 1295.2,1051.5 1296.3,920.3 1298.0,916.7 1299.5,963.1 1301.6,945.3 1304.1,1051.5 1305.9,973.8 1307.7,945.3 1309.5,991.6 1311.2,1051.5 1314.1,956.0 1316.6,948.8 1320.2,970.2 1321.9,968.5 1325.5,1051.5 1327.7,984.5 1329.1,1027.3 1330.9,979.2 1332.6,1016.6 1335.5,1002.3 1338.0,1051.5 1340.5,1038.0 1342.8,1013.0 1344.9,966.7 1346.7,977.4 1348.5,1020.2 1350.2,1023.7 1352.4,1027.3 1353.8,1051.5 1409.8,1051.5"/>
</svg>
<div class="abs" style="left:900px;top:742px;width:173px;height:62px;background:#fff;border-radius:2px;box-shadow:0 1px 3px rgba(0,0,0,0.12)"></div>
<div class="abs" style="left:900px;top:773px;width:173px;height:1px;background:#eceef1"></div>
<div class="lbl" style="left:909px;top:748px;font-size:14px">09:07:22</div>
<div class="lbl" style="left:1009px;top:748px;font-size:14px;color:#8a9099">12-31</div>
<div class="abs" style="left:909px;top:787px;width:19px;height:5px;background:#3492e8;border-radius:3px"></div>
<div class="lbl" style="left:946px;top:780px;font-size:14px">Speed</div>
<div class="lbl" style="left:1004px;top:780px;font-size:14px">164 km/h</div>
</div>
<div id="status">
<svg class="abs" style="left:23px;top:12px" width="20" height="18" viewBox="0 0 20 18"><rect x="1" y="1" width="18" height="16" fill="none" stroke="#1f2937" stroke-width="2"/><rect x="1" y="1" width="5" height="16" fill="#1f2937"/></svg>
<svg class="abs" style="left:64px;top:13px" width="17" height="17" viewBox="0 0 17 17" fill="#a4a8af"><rect x="0" y="0" width="4.5" height="4.5"/><rect x="6" y="0" width="4.5" height="4.5"/><rect x="12" y="0" width="4.5" height="4.5"/><rect x="0" y="6" width="4.5" height="4.5"/><rect x="6" y="6" width="4.5" height="4.5"/><rect x="12" y="6" width="4.5" height="4.5"/><rect x="0" y="12" width="4.5" height="4.5"/><rect x="6" y="12" width="4.5" height="4.5"/><rect x="12" y="12" width="4.5" height="4.5"/></svg>
<div class="lbl" style="left:846px;top:11px">© Gurtam</div>
<svg class="abs" style="left:1681px;top:12px" width="21" height="18" viewBox="0 0 21 18"><rect x="0.5" y="0.5" width="20" height="17" fill="#1f2937"/><rect x="2.5" y="2.5" width="16" height="3" fill="#fff"/><rect x="4" y="9" width="9" height="1.8" fill="#fff"/><rect x="4" y="13" width="6" height="1.8" fill="#fff"/></svg>
<div class="abs" style="left:1707px;top:12px;width:33px;height:18px;border-radius:9px;background:#ee4036;color:#fff;font-size:13px;text-align:center;line-height:18px;-webkit-text-stroke:0.4px #fff">3</div>
<svg class="abs" style="left:1759px;top:12px" width="26" height="18" viewBox="0 0 26 18" fill="#a4a8af"><path d="M0 0h21v8l-3 2-3-2v5H0z"/><path d="M1.5 1.5l9.5 7 9.5-7" fill="none" stroke="#fff" stroke-width="1.8"/><path d="M13 12h7v-3l4 4.5-4 4.5v-3h-7z"/><path d="M26 9h-5V7l-3 3" /></svg>
<svg class="abs" style="left:1804px;top:12px" width="19" height="18" viewBox="0 0 19 18"><rect x="0" y="0" width="19" height="18" fill="#a4a8af"/><rect x="1.5" y="1.5" width="16" height="15" fill="#fff"/><path d="M2 15l5-6 3 3 3-4 4 7z" fill="#a4a8af"/><circle cx="6" cy="5.5" r="1.8" fill="#a4a8af"/></svg>
<svg class="abs" style="left:1842px;top:14px" width="23" height="13" viewBox="0 0 23 13"><rect x="0" y="0" width="11" height="13" fill="#1f2937"/><rect x="12.5" y="0" width="10.5" height="13" fill="#1f2937"/><rect x="2" y="2.5" width="5" height="1.5" fill="#fff"/><rect x="2" y="5.8" width="5" height="1.5" fill="#fff"/><rect x="2" y="9" width="3" height="1.5" fill="#fff"/></svg>
<div class="lbl" style="left:1884px;top:11px">13:55:54 (+03)</div>
</div>
</body></html>
